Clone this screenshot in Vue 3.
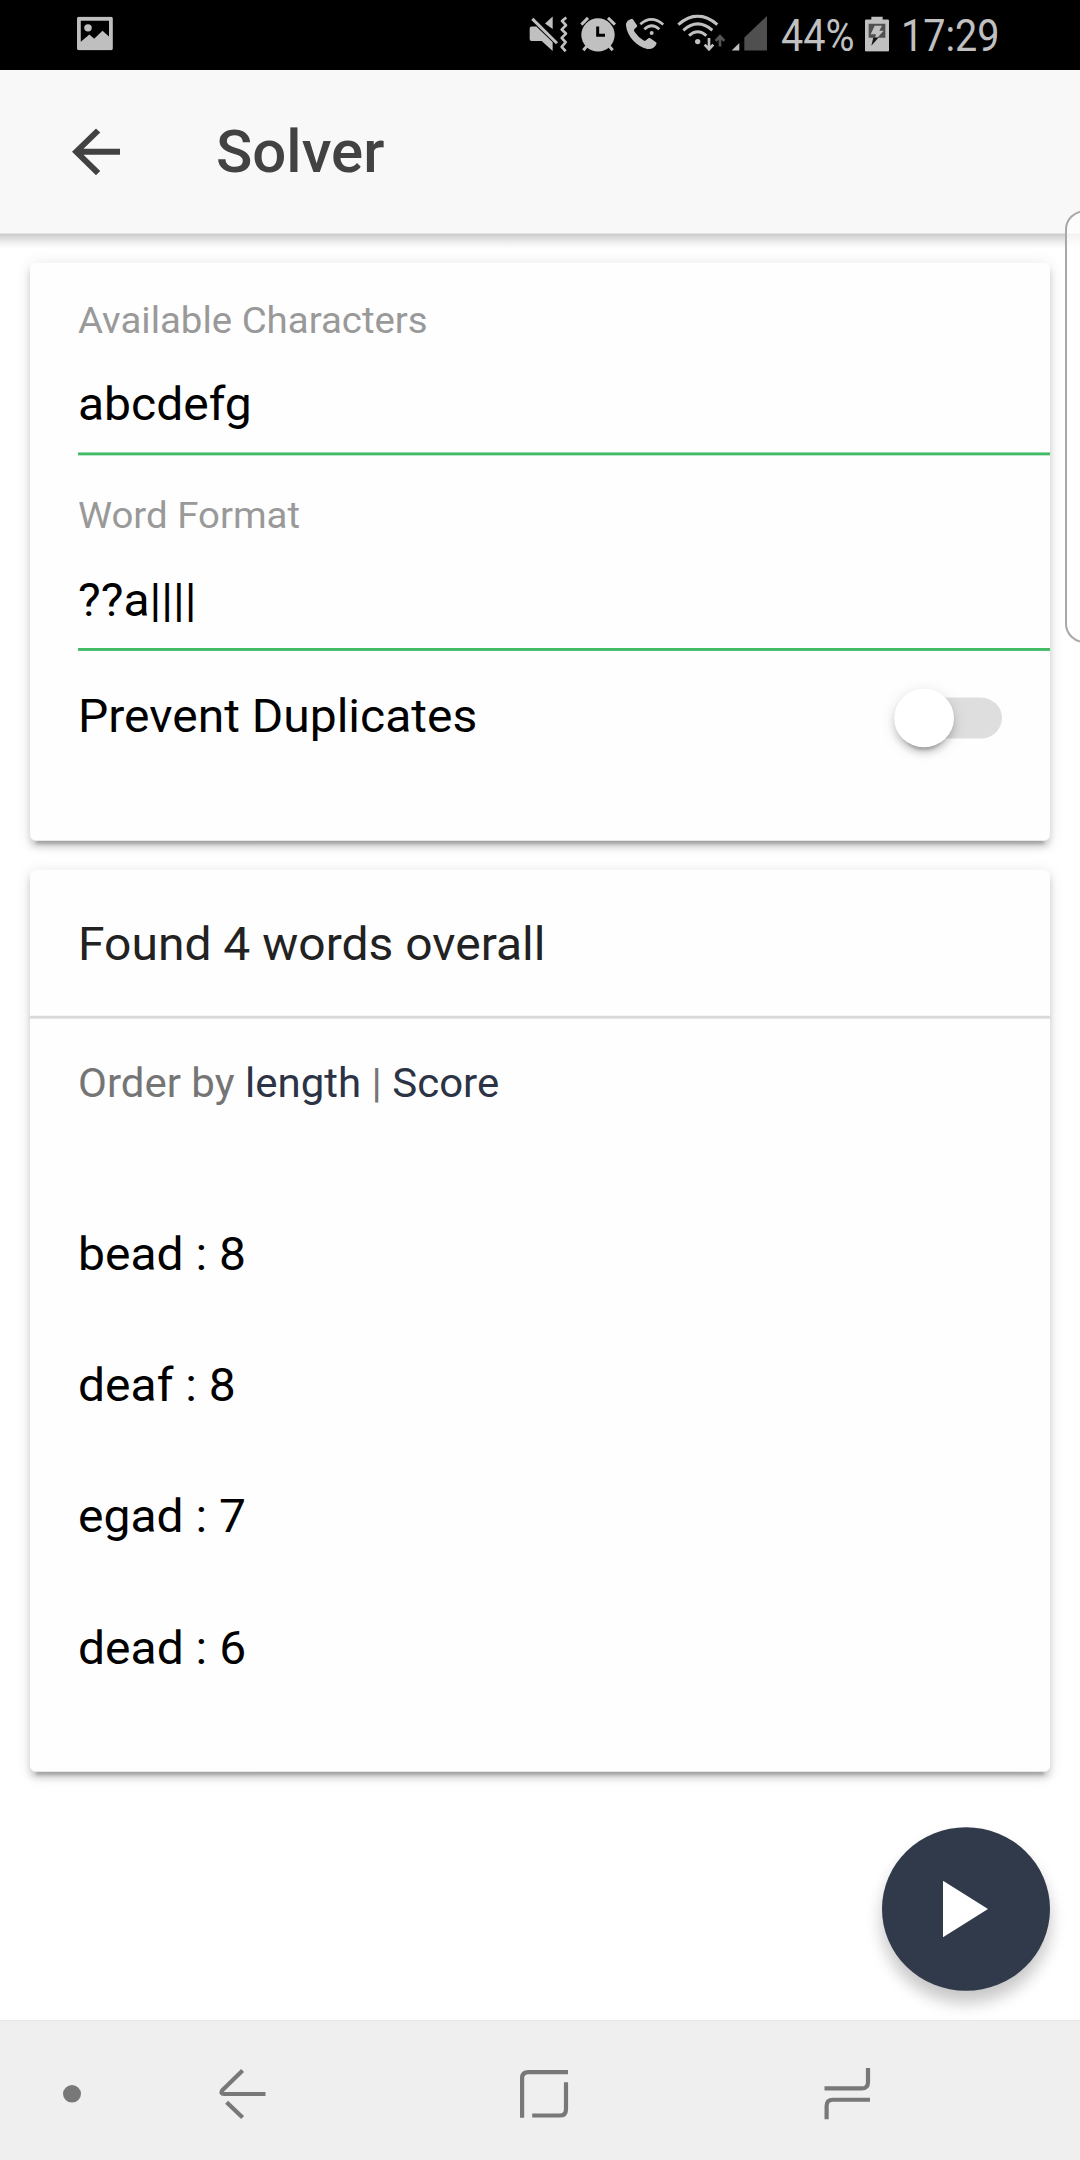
<script setup>
import { ref } from 'vue'

const fields = ref([
  { label: 'Available Characters', value: 'abcdefg' },
  { label: 'Word Format', value: '??a||||' },
])
const words = ref([
  { word: 'bead', score: 8 },
  { word: 'deaf', score: 8 },
  { word: 'egad', score: 7 },
  { word: 'dead', score: 6 },
])
</script>

<template>
  <div class="viewport">
    <div class="screen">
      <div class="status">
        <svg class="s-picture" viewBox="224 50 104 101" preserveAspectRatio="none">
          <path fill="#bfbfbf" fill-rule="evenodd" d="M229 51H323Q328 51 328 56V146Q328 151 323 151H229Q224 151 224 146V56Q224 51 229 51ZM235 63V126L260 104L274 117L298 93L317 110V63Z" />
          <circle cx="256" cy="84" r="11" fill="#bfbfbf" />
        </svg>
        <svg class="s-mute" viewBox="58 44 116 116" preserveAspectRatio="none">
          <g fill="#c0c0c0">
            <path d="M66 80H80L129 127V153L96 123H66Q60 123 60 117V86Q60 80 66 80Z" />
            <path d="M106 71L129 50V87Z" />
          </g>
          <path d="M68 57L142 130" fill="none" stroke="#c0c0c0" stroke-width="9" />
          <path d="M170 53Q164 57 157 63L169 76L156 89L169 101L156 114L168 127L156 141L168 154" fill="none" stroke="#c0c0c0" stroke-width="8" stroke-linejoin="round" />
        </svg>
        <svg class="s-alarm" viewBox="210 44 108 116" preserveAspectRatio="none">
          <circle cx="264" cy="105" r="50" fill="#c0c0c0" />
          <path d="M214 74L234 54M294 54L315 74" stroke="#c0c0c0" stroke-width="9" />
          <path d="M232 137L220 151M296 137L308 151" stroke="#c0c0c0" stroke-width="9" />
          <path d="M263 80V106H285" fill="none" stroke="#000" stroke-width="9" />
        </svg>
        <svg class="s-call" viewBox="344 44 118 116" preserveAspectRatio="none">
          <path fill="#c0c0c0" d="M363 57Q366 56 368 59L380 76Q382 79 379 81L372 88Q370 91 372 95Q383 112 400 122Q404 124 407 121L414 115Q417 113 420 115L437 127Q440 129 438 133C433 144 424 149 411 147C378 141 350 108 347 77C346 68 352 60 363 57Z" />
          <g fill="none" stroke="#c0c0c0" stroke-width="8">
            <path d="M390 73Q423 43 459 74" />
            <path d="M402 88Q424 67 447 88" />
          </g>
          <circle cx="424" cy="99" r="6" fill="#c0c0c0" />
        </svg>
        <svg class="s-wifi" viewBox="500 44 148 116" preserveAspectRatio="none">
          <g fill="none" stroke="#c0c0c0" stroke-width="9">
            <path d="M504 74Q562 23 621 74" />
            <path d="M519 91Q562 53 606 91" />
            <path d="M536 107Q562 84 588 107" />
          </g>
          <circle cx="562" cy="125" r="8" fill="#c0c0c0" />
          <path d="M596 114V147M583 134L596 148L609 134" fill="none" stroke="#c0c0c0" stroke-width="8" />
          <path d="M629 140V108M616 123L629 109L642 123" fill="none" stroke="#555" stroke-width="8" />
        </svg>
        <svg class="s-signal" viewBox="662 44 110 116" preserveAspectRatio="none">
          <path d="M687 129V152H664Z" fill="#c0c0c0" />
          <path d="M771 47V152H702V113Z" fill="#4f4f4f" />
        </svg>
        <span class="s-text s-percent">44%</span>
        <svg class="s-battery" viewBox="315 50 72 106" preserveAspectRatio="none">
          <path fill="#c0c0c0" d="M334 50H368V59H383Q387 59 387 63V152Q387 156 383 156H319Q315 156 315 152V63Q315 59 319 59H334Z" />
          <path d="M326 72H376V114H326Z" fill="#505050" />
          <path d="M344 78H366L358 93H371L352 114H345L348 103H332Z" fill="#c0c0c0" />
          <path d="M340 113H356L334 138Z" fill="#151515" />
        </svg>
        <span class="s-text s-time">17:29</span>
      </div>

      <header class="toolbar">
        <svg class="back" viewBox="4 4 16 16"><path fill="#424242" d="M20 11H7.83l5.59-5.59L12 4l-8 8 8 8 1.41-1.41L7.83 13H20z" /></svg>
        <h1>Solver</h1>
      </header>

      <main>
        <section class="card form">
          <label v-for="f in fields" :key="f.label" class="field">
            <span class="label">{{ f.label }}</span>
            <span class="value">{{ f.value }}</span>
          </label>
          <div class="option">
            <span class="option-text">Prevent Duplicates</span>
            <span class="toggle"><i class="knob"></i></span>
          </div>
        </section>

        <section class="card results">
          <h2>Found 4 words overall</h2>
          <p class="order">Order by <a>length</a> | <a>Score</a></p>
          <ul>
            <li v-for="w in words" :key="w.word">{{ w.word }} : {{ w.score }}</li>
          </ul>
        </section>

        <button class="fab" aria-label="Solve">
          <svg viewBox="0 0 45 58"><path d="M0 0L45 29L0 58Z" fill="#fff" /></svg>
        </button>
      </main>

      <nav class="navbar">
        <span class="dot"></span>
        <svg class="n-back" viewBox="218 2124 50 56">
          <path d="M242.6 2128L222.3 2148.4Q220.2 2152.2 224 2152.2H265.5M226.6 2160.6L242.6 2176.4" />
        </svg>
        <svg class="n-home" viewBox="518 2124 52 56">
          <path d="M522.1 2176.5V2136Q522.1 2129.7 528.5 2129.7H568M566 2140V2168Q566 2174.3 559.6 2174.3H532.2" />
        </svg>
        <svg class="n-recent" viewBox="822 2124 50 56">
          <path d="M824.5 2146.4H861.5Q868 2146.4 868 2140V2125.5M870 2158H833Q826.6 2158 826.6 2164.4V2178" />
        </svg>
      </nav>

      <div class="edge-handle"></div>
    </div>
  </div>
</template>

<style>
body {
  margin: 0;
  background: #fff;
}
</style>

<style scoped>
.viewport {
  width: 1080px;
  height: 2160px;
  overflow: hidden;
}
/* 1080x2220 device canvas fitted to the 2160px viewport height */
.screen {
  position: relative;
  display: flex;
  flex-direction: column;
  width: 1080px;
  height: 2220px;
  overflow: hidden;
  background: #fff;
  color: #000;
  font-family: Roboto, "Liberation Sans", sans-serif;
  font-size: 48px;
  transform: scaleY(0.972973);
  transform-origin: 0 0;
}
svg {
  display: block;
  flex: none;
}
.status {
  display: flex;
  flex: none;
  align-items: flex-start;
  height: 72px;
  background: #000;
}
.status svg {
  height: 39.74px;
  margin-top: 15.07px;
}
.status .s-picture {
  width: 35.8px;
  height: 34.6px;
  margin: 17.2px 0 0 77.1px;
}
.status .s-mute {
  width: 38.67px;
  margin-left: auto;
}
.s-alarm {
  width: 36px;
  margin-left: 12px;
}
.s-call {
  width: 39.33px;
  margin-left: 8.67px;
}
.s-wifi {
  width: 49.33px;
  margin-left: 12.67px;
}
.s-signal {
  width: 36.67px;
  margin-left: 4.67px;
}
.s-text {
  color: #c0c0c0;
  font-size: 45px;
  line-height: 73px;
  height: 72px;
  white-space: nowrap;
  transform: scaleX(0.88);
  transform-origin: 0 50%;
}
.s-percent {
  width: 83.7px;
  margin-left: 14px;
}
.status .s-battery {
  width: 24px;
  height: 36.3px;
  margin-top: 17.1px;
}
.s-time {
  width: 179px;
  margin-left: 12px;
}
.toolbar {
  position: relative;
  z-index: 1;
  display: flex;
  flex: none;
  align-items: center;
  box-sizing: border-box;
  height: 168px;
  padding-left: 72px;
  background: #f8f8f8;
}
.toolbar::after {
  content: "";
  position: absolute;
  left: 0;
  right: 0;
  top: 100%;
  height: 15px;
  background: linear-gradient(#cacaca, #dcdcdc 30%, #f3f3f3 70%, #fdfdfd);
}
.back {
  width: 48px;
  height: 48px;
}
h1 {
  margin: 2px 0 0 96px;
  color: #424242;
  font-size: 60px;
  font-weight: 500;
  line-height: 72px;
}
main {
  display: flex;
  flex: 1;
  flex-direction: column;
  padding: 30px 30px 0;
}
.card {
  box-sizing: border-box;
  border-radius: 6px;
  background: #fefefe;
  box-shadow: 0 6px 6px rgba(0, 0, 0, 0.14), 0 9px 3px -6px rgba(0, 0, 0, 0.2), 0 3px 15px rgba(0, 0, 0, 0.12);
}
.form {
  height: 594px;
}
.field {
  display: flex;
  flex-direction: column;
  justify-content: flex-end;
  box-sizing: border-box;
  height: 201px;
  margin-left: 48px;
  border-bottom: 3px solid #42bb67;
}
.field:first-child {
  height: 198px;
}
.label {
  color: #999;
  font-size: 38.4px;
  line-height: 48px;
}
.value {
  padding: 33px 0 19px;
  line-height: 60px;
}
.option {
  display: flex;
  align-items: center;
  justify-content: space-between;
  height: 138px;
  padding: 0 48px;
}
.option-text {
  padding-bottom: 5px;
}
.toggle {
  display: flex;
  align-items: center;
  width: 108px;
  height: 42px;
  border-radius: 21px;
  background: #dedede;
}
.knob {
  width: 60px;
  height: 60px;
  border-radius: 50%;
  background: #fff;
  box-shadow: 0 6px 6px rgba(0, 0, 0, 0.14), 0 9px 3px -6px rgba(0, 0, 0, 0.2), 0 3px 15px rgba(0, 0, 0, 0.12);
}
.results {
  height: 927px;
  margin-top: 30px;
}
h2 {
  margin: 0;
  padding: 0 48px;
  border-bottom: 3px solid #d9d9d9;
  color: #222;
  font-size: 48px;
  font-weight: 400;
  line-height: 154px;
  height: 150px;
}
.order {
  margin: 36px 48px 78px;
  color: #757575;
  font-size: 42px;
  line-height: 60px;
}
.order a {
  color: #2b3345;
}
ul {
  margin: 0;
  padding: 0 48px;
  list-style: none;
}
li {
  line-height: 135px;
}
.fab {
  display: flex;
  align-items: center;
  justify-content: center;
  align-self: flex-end;
  width: 168px;
  height: 168px;
  margin-top: 57px;
  padding: 0;
  border: 0;
  border-radius: 50%;
  background: #303a4a;
  box-shadow: 0 12px 18px rgba(0, 0, 0, 0.14), 0 12px 15px rgba(0, 0, 0, 0.1);
}
.fab svg {
  width: 45px;
  height: 58px;
  margin-right: 1px;
}
.navbar {
  position: relative;
  display: flex;
  flex: none;
  align-items: center;
  box-sizing: border-box;
  height: 144px;
  padding: 6px 0 0 63px;
  border-top: 1px solid #e6e6e6;
  background: #efefef;
}
.navbar path {
  fill: none;
  stroke: #787878;
  stroke-width: 4.2;
}
.dot {
  width: 18px;
  height: 18px;
  border-radius: 50%;
  background: #787878;
}
.n-back {
  width: 50px;
  height: 56px;
  margin-left: 137px;
}
.n-home {
  width: 52px;
  height: 56px;
  margin-left: 250px;
}
.n-recent {
  width: 50px;
  height: 56px;
  margin-left: 252px;
}
/* system edge panel handle floating over the app */
.edge-handle {
  position: absolute;
  z-index: 2;
  top: 216px;
  right: -10px;
  box-sizing: border-box;
  width: 25px;
  height: 445px;
  border: 2px solid #a8a8a8;
  border-radius: 20px 0 0 20px;
  background: rgba(255, 255, 255, 0.75);
}
</style>
